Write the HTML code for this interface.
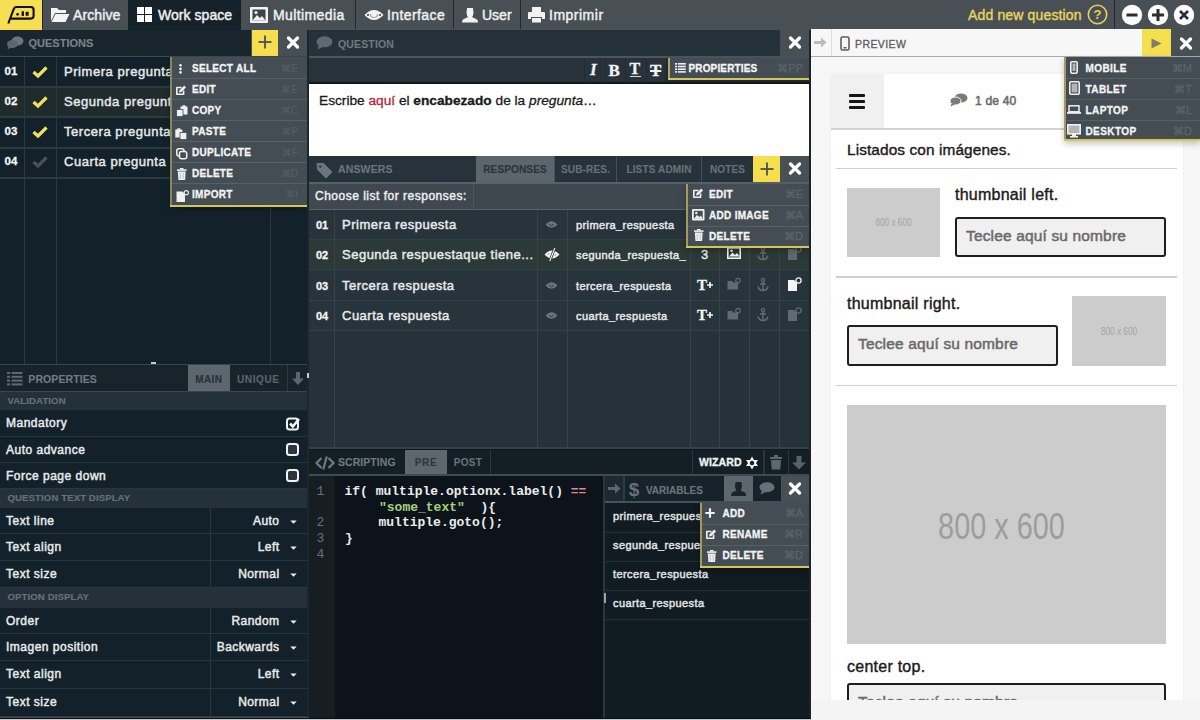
<!DOCTYPE html>
<html><head><meta charset="utf-8">
<style>
*{box-sizing:border-box;margin:0;padding:0}
html,body{width:1200px;height:720px;overflow:hidden;background:#485056;font-family:"Liberation Sans",sans-serif;position:relative}
.a{position:absolute}
.t{position:absolute;white-space:nowrap;line-height:1;-webkit-text-stroke:0.3px currentColor}
svg{position:absolute;overflow:visible}
</style></head><body>
<div class="a" style="left:0px;top:0px;width:1200px;height:30px;background:#485056;"></div>
<div class="a" style="left:0px;top:0px;width:42px;height:30px;background:#f6de55;"></div>
<div class="a" style="left:42px;top:0px;width:1px;height:29px;background:#1f282e;"></div>
<div class="a" style="left:128px;top:0px;width:113px;height:30px;background:#16222a;"></div>
<div class="a" style="left:355px;top:0px;width:1px;height:29px;background:#1f292f;"></div>
<div class="a" style="left:453px;top:0px;width:1px;height:29px;background:#1f292f;"></div>
<div class="a" style="left:520px;top:0px;width:1px;height:29px;background:#1f292f;"></div>
<div class="a" style="left:1114px;top:0px;width:1px;height:29px;background:#1f292f;"></div>
<svg style="left:0px;top:0px;" width="42" height="30" viewBox="0 0 42 30"><path d="M8.3 23.5 L13.8 8.8 Q14.5 7 16.5 7 H30.8 Q33.6 7 33.6 10 V15.8 Q33.6 18.6 30.8 18.6 H11.2" fill="none" stroke="#111" stroke-width="2.1" stroke-linejoin="round"/><circle cx="17.6" cy="14.3" r="1.35" fill="#111"/><rect x="21.6" y="11.3" width="2.4" height="4.6" fill="#111"/><rect x="25.6" y="11.8" width="3" height="4" rx="0.6" fill="#111"/></svg>
<svg style="left:49px;top:6px;" width="22" height="17" viewBox="0 0 22 17"><path d="M2 2 H8 L10 4 H17 V7 H6 L2 15 Z" fill="#f4f4f4"/><path d="M6.5 8 H20.5 L16.5 16 H2.5 Z" fill="#f4f4f4"/></svg>
<div class="t" style="left:73px;top:8.15px;font-size:14px;color:#eef0f0;font-weight:normal;letter-spacing:0.1px;-webkit-text-stroke:0.45px">Archive</div>
<svg style="left:137px;top:7px;" width="15" height="15" viewBox="0 0 15 15"><rect x="0" y="0" width="7" height="7" fill="#fff"/><rect x="8" y="0" width="7" height="7" fill="#fff"/><rect x="0" y="8" width="7" height="7" fill="#fff"/><rect x="8" y="8" width="7" height="7" fill="#fff"/></svg>
<div class="t" style="left:158px;top:8.15px;font-size:14px;color:#eef0f0;font-weight:normal;letter-spacing:0.05px;-webkit-text-stroke:0.45px">Work space</div>
<svg style="left:250px;top:7px;" width="18" height="16" viewBox="0 0 18 16"><rect x="0" y="0" width="18" height="16" rx="1" fill="#f2f2f2"/><rect x="2.5" y="2.5" width="13" height="11" fill="#3b4449"/><path d="M2.5 13.5 L7 8 L10 11 L12 9 L15.5 13.5 Z" fill="#f2f2f2"/><circle cx="6" cy="5.5" r="1.6" fill="#f2f2f2"/></svg>
<div class="t" style="left:273px;top:8.15px;font-size:14px;color:#eef0f0;font-weight:normal;letter-spacing:0.4px;-webkit-text-stroke:0.45px">Multimedia</div>
<svg style="left:364px;top:8px;" width="20" height="14" viewBox="0 0 20 14"><path d="M0.5 7 Q10 -3 19.5 7 Q10 17 0.5 7 Z" fill="#f4f4f4"/><path d="M6.5 6 A3.5 3.5 0 0 0 13.5 6" fill="none" stroke="#9aa0a4" stroke-width="1.2"/><circle cx="4" cy="7" r="1" fill="#333"/><circle cx="16" cy="7" r="1" fill="#333"/></svg>
<div class="t" style="left:387px;top:8.15px;font-size:14px;color:#eef0f0;font-weight:normal;letter-spacing:0.4px;-webkit-text-stroke:0.45px">Interface</div>
<svg style="left:462px;top:7px;" width="16" height="16" viewBox="0 0 16 16"><path d="M5 1 H11 L11.5 6 Q11 9 10 10 L15 12.5 Q16 13.5 16 15.5 H0 Q0 13.5 1 12.5 L6 10 Q5 9 4.5 6 Z" fill="#f2f2f2"/></svg>
<div class="t" style="left:482px;top:8.15px;font-size:14px;color:#eef0f0;font-weight:normal;letter-spacing:0px;-webkit-text-stroke:0.45px">User</div>
<svg style="left:528px;top:7px;" width="17" height="16" viewBox="0 0 17 16"><rect x="4" y="0" width="9" height="5" fill="#f2f2f2"/><path d="M1 5 H16 Q17 5 17 6 V12 H14 V10 H3 V12 H0 V6 Q0 5 1 5 Z" fill="#f2f2f2"/><rect x="4" y="11" width="9" height="4.5" fill="#f2f2f2"/></svg>
<div class="t" style="left:549px;top:8.15px;font-size:14px;color:#eef0f0;font-weight:normal;letter-spacing:0.5px;-webkit-text-stroke:0.45px">Imprimir</div>
<div class="t" style="left:968px;top:8.15px;font-size:14px;color:#e4d25a;font-weight:normal;letter-spacing:0.15px;-webkit-text-stroke:0.45px #e4d25a">Add new question</div>
<svg style="left:1087px;top:4px;" width="21" height="21" viewBox="0 0 21 21"><circle cx="10.5" cy="10.5" r="9.2" fill="none" stroke="#e4d25a" stroke-width="1.6"/><text x="10.5" y="15" text-anchor="middle" font-family="Liberation Sans" font-weight="bold" font-size="13" fill="#e4d25a">?</text></svg>
<svg style="left:1120.8px;top:3.5px;" width="22" height="22" viewBox="0 0 22 22"><circle cx="11" cy="11" r="10.2" fill="#fbfbfb"/><rect x="5.5" y="9.5" width="11" height="3" fill="#2b2f33"/></svg>
<svg style="left:1146.8px;top:3.5px;" width="22" height="22" viewBox="0 0 22 22"><circle cx="11" cy="11" r="10.2" fill="#fbfbfb"/><rect x="5" y="9.5" width="12" height="3" fill="#2b2f33"/><rect x="9.5" y="5" width="3" height="12" fill="#2b2f33"/></svg>
<svg style="left:1172.8px;top:3.5px;" width="22" height="22" viewBox="0 0 22 22"><circle cx="11" cy="11" r="10.2" fill="#fbfbfb"/><path d="M7 7 L15 15 M15 7 L7 15" stroke="#2b2f33" stroke-width="2.6"/></svg>
<div class="a" style="left:0px;top:30px;width:307px;height:27px;background:#485056;"></div>
<div class="a" style="left:0px;top:30px;width:251px;height:25.5px;background:#1a262d;"></div>
<svg style="left:6px;top:36px;" width="18" height="14" viewBox="0 0 18 14"><ellipse cx="11.5" cy="5" rx="6" ry="4.5" fill="#6b767c"/><ellipse cx="6.5" cy="8" rx="5.5" ry="4" fill="#5d686e"/><path d="M2.5 10 L1.5 13.5 L6 11 Z" fill="#5d686e"/></svg>
<div class="t" style="left:28.5px;top:38.19px;font-size:11px;color:#78838a;font-weight:bold;letter-spacing:0px;-webkit-text-stroke:0.15px">QUESTIONS</div>
<div class="a" style="left:251.5px;top:30px;width:26.5px;height:26px;background:#f5df4f;"></div>
<svg style="left:258px;top:35px;" width="14" height="14" viewBox="0 0 14 14"><rect x="0.5" y="6.1" width="13" height="1.8" fill="#4a5358"/><rect x="6.1" y="0.5" width="1.8" height="13" fill="#4a5358"/></svg>
<svg style="left:285.5px;top:35.5px;" width="14" height="14" viewBox="0 0 14 14"><path d="M2.5 2 L11.5 11 M11.5 2 L2.5 11" stroke="#fff" stroke-width="3.3" stroke-linecap="round"/></svg>
<div class="a" style="left:0px;top:55.5px;width:307px;height:2px;background:#3c4951;"></div>
<div class="a" style="left:0px;top:57px;width:307px;height:307px;background:#13222a;"></div>
<div class="a" style="left:0px;top:87px;width:307px;height:30px;background:#1f2b2d;"></div>
<div class="a" style="left:0px;top:86px;width:307px;height:1.5px;background:#2c3a42;"></div>
<div class="a" style="left:0px;top:116px;width:307px;height:1.5px;background:#2c3a42;"></div>
<div class="a" style="left:0px;top:147px;width:307px;height:1.5px;background:#2c3a42;"></div>
<div class="a" style="left:0px;top:177px;width:307px;height:1.5px;background:#2c3a42;"></div>
<div class="a" style="left:24px;top:57px;width:1px;height:307px;background:#2a3840;"></div>
<div class="a" style="left:56px;top:57px;width:1px;height:307px;background:#2a3840;"></div>
<div class="a" style="left:270px;top:57px;width:1px;height:307px;background:#2a3840;"></div>
<div class="t" style="left:4.5px;top:66.27px;font-size:11.5px;color:#f4f4f4;font-weight:bold;letter-spacing:0px;">01</div>
<svg style="left:32px;top:66px;" width="16" height="12" viewBox="0 0 16 12"><path d="M1.5 6 L6 10 L14.5 1.5" fill="none" stroke="#f3df5c" stroke-width="3.2" stroke-linejoin="miter"/></svg>
<div class="t" style="left:64px;top:65.00px;font-size:13px;color:#e6e8e8;font-weight:normal;letter-spacing:0.55px;-webkit-text-stroke:0.45px">Primera pregunta</div>
<div class="t" style="left:4.5px;top:96.27px;font-size:11.5px;color:#f4f4f4;font-weight:bold;letter-spacing:0px;">02</div>
<svg style="left:32px;top:96px;" width="16" height="12" viewBox="0 0 16 12"><path d="M1.5 6 L6 10 L14.5 1.5" fill="none" stroke="#f3df5c" stroke-width="3.2" stroke-linejoin="miter"/></svg>
<div class="t" style="left:64px;top:95.00px;font-size:13px;color:#e6e8e8;font-weight:normal;letter-spacing:0.55px;-webkit-text-stroke:0.45px">Segunda pregunta</div>
<div class="t" style="left:4.5px;top:126.27px;font-size:11.5px;color:#f4f4f4;font-weight:bold;letter-spacing:0px;">03</div>
<svg style="left:32px;top:126px;" width="16" height="12" viewBox="0 0 16 12"><path d="M1.5 6 L6 10 L14.5 1.5" fill="none" stroke="#f3df5c" stroke-width="3.2" stroke-linejoin="miter"/></svg>
<div class="t" style="left:64px;top:125.00px;font-size:13px;color:#e6e8e8;font-weight:normal;letter-spacing:0.55px;-webkit-text-stroke:0.45px">Tercera pregunta</div>
<div class="t" style="left:4.5px;top:156.27px;font-size:11.5px;color:#f4f4f4;font-weight:bold;letter-spacing:0px;">04</div>
<svg style="left:32px;top:156px;" width="16" height="12" viewBox="0 0 16 12"><path d="M1.5 6 L6 10 L14.5 1.5" fill="none" stroke="#46525a" stroke-width="3.2" stroke-linejoin="miter"/></svg>
<div class="t" style="left:64px;top:155.00px;font-size:13px;color:#e6e8e8;font-weight:normal;letter-spacing:0.55px;-webkit-text-stroke:0.45px">Cuarta pregunta</div>
<div class="a" style="left:0px;top:364px;width:307px;height:1px;background:#3a464e;"></div>
<div class="a" style="left:151px;top:362px;width:5px;height:2px;background:#c8ccce;"></div>
<div class="a" style="left:169.5px;top:57px;width:137.5px;height:150px;background:#444d53;box-shadow:0 3px 6px rgba(0,0,0,0.22)"></div>
<div class="a" style="left:169.5px;top:57px;width:2px;height:150px;background:#8a8760;"></div>
<div class="a" style="left:169.5px;top:205px;width:137.5px;height:2px;background:#d6c552;"></div>
<div class="t" style="left:192px;top:64.03px;font-size:10px;color:#f4f4f4;font-weight:bold;letter-spacing:0.3px;">SELECT ALL</div>
<div class="t" style="right:902px;top:64.03px;font-size:10px;color:#566067;font-weight:normal;letter-spacing:0px;-webkit-text-stroke:0">&#8984;E</div>
<div class="a" style="left:171.5px;top:78px;width:135.5px;height:1px;background:#566067;"></div>
<div class="t" style="left:192px;top:85.03px;font-size:10px;color:#f4f4f4;font-weight:bold;letter-spacing:0.3px;">EDIT</div>
<div class="t" style="right:902px;top:85.03px;font-size:10px;color:#566067;font-weight:normal;letter-spacing:0px;-webkit-text-stroke:0">&#8984;E</div>
<div class="a" style="left:171.5px;top:99px;width:135.5px;height:1px;background:#566067;"></div>
<div class="t" style="left:192px;top:106.03px;font-size:10px;color:#f4f4f4;font-weight:bold;letter-spacing:0.3px;">COPY</div>
<div class="t" style="right:902px;top:106.03px;font-size:10px;color:#566067;font-weight:normal;letter-spacing:0px;-webkit-text-stroke:0">&#8984;C</div>
<div class="a" style="left:171.5px;top:120px;width:135.5px;height:1px;background:#566067;"></div>
<div class="t" style="left:192px;top:127.03px;font-size:10px;color:#f4f4f4;font-weight:bold;letter-spacing:0.3px;">PASTE</div>
<div class="t" style="right:902px;top:127.03px;font-size:10px;color:#566067;font-weight:normal;letter-spacing:0px;-webkit-text-stroke:0">&#8984;P</div>
<div class="a" style="left:171.5px;top:141px;width:135.5px;height:1px;background:#566067;"></div>
<div class="t" style="left:192px;top:148.03px;font-size:10px;color:#f4f4f4;font-weight:bold;letter-spacing:0.3px;">DUPLICATE</div>
<div class="t" style="right:902px;top:148.03px;font-size:10px;color:#566067;font-weight:normal;letter-spacing:0px;-webkit-text-stroke:0">&#8984;F</div>
<div class="a" style="left:171.5px;top:162px;width:135.5px;height:1px;background:#566067;"></div>
<div class="t" style="left:192px;top:169.03px;font-size:10px;color:#f4f4f4;font-weight:bold;letter-spacing:0.3px;">DELETE</div>
<div class="t" style="right:902px;top:169.03px;font-size:10px;color:#566067;font-weight:normal;letter-spacing:0px;-webkit-text-stroke:0">&#8984;D</div>
<div class="a" style="left:171.5px;top:183px;width:135.5px;height:1px;background:#566067;"></div>
<div class="t" style="left:192px;top:190.03px;font-size:10px;color:#f4f4f4;font-weight:bold;letter-spacing:0.3px;">IMPORT</div>
<div class="t" style="right:902px;top:190.03px;font-size:10px;color:#566067;font-weight:normal;letter-spacing:0px;-webkit-text-stroke:0">&#8984;I</div>
<svg style="left:179px;top:63.5px;" width="3" height="10" viewBox="0 0 3 10"><circle cx="1.5" cy="1.3" r="1.3" fill="#f0f0f0"/><circle cx="1.5" cy="4.9" r="1.3" fill="#f0f0f0"/><circle cx="1.5" cy="8.4" r="1.3" fill="#f0f0f0"/></svg>
<svg style="left:175px;top:84.5px;" width="12" height="11" viewBox="0 0 12 11"><path d="M6.5 2.5 H1.8 V9.3 H8.6 V5.5" fill="none" stroke="#f0f0f0" stroke-width="1.6" stroke-linejoin="round"/><path d="M4 7.5 L4.6 5.2 L9.2 0.6 L11 2.4 L6.4 7 Z" fill="#f0f0f0"/></svg>
<svg style="left:175.5px;top:105px;" width="12" height="12" viewBox="0 0 12 12"><rect x="4.5" y="1.5" width="7" height="8" fill="#f0f0f0"/><rect x="6.5" y="0.3" width="3" height="2" fill="#f0f0f0"/><rect x="0.5" y="4.5" width="6.5" height="7" fill="#f0f0f0" stroke="#444d53" stroke-width="0.8"/></svg>
<svg style="left:175px;top:127.5px;" width="12" height="11.5" viewBox="0 0 12 11.5"><rect x="0.3" y="1.5" width="7" height="8" fill="#f0f0f0"/><rect x="2.3" y="0.3" width="3" height="2" fill="#f0f0f0"/><rect x="5" y="4.5" width="6.8" height="7" fill="#f0f0f0" stroke="#444d53" stroke-width="0.8"/></svg>
<svg style="left:175.5px;top:147.5px;" width="11.5" height="11.5" viewBox="0 0 11.5 11.5"><rect x="0.8" y="0.8" width="7.2" height="7.2" rx="2" fill="none" stroke="#f0f0f0" stroke-width="1.5"/><rect x="3.5" y="3.5" width="7.2" height="7.2" rx="2" fill="#444d53" stroke="#f0f0f0" stroke-width="1.5"/></svg>
<svg style="left:177px;top:168px;" width="9.5" height="12" viewBox="0 0 9.5 12"><rect x="0" y="1.3" width="9.5" height="1.6" fill="#f0f0f0"/><rect x="3" y="0" width="3.5" height="1.6" fill="#f0f0f0"/><path d="M0.8 3.6 H8.7 L8.1 12 H1.4 Z" fill="#f0f0f0"/><path d="M3.3 5 V10.8 M6.2 5 V10.8" stroke="#a6acaf" stroke-width="0.7"/></svg>
<svg style="left:176px;top:189.5px;" width="13" height="12" viewBox="0 0 13 12"><path d="M0.5 1.5 H6.5 L9 4 V12 H0.5 Z" fill="#f0f0f0"/><circle cx="10.3" cy="2.7" r="2.1" fill="#444d53" stroke="#f0f0f0" stroke-width="1.1"/></svg>
<div class="a" style="left:0px;top:365px;width:307px;height:26px;background:#18242c;"></div>
<svg style="left:7px;top:372px;" width="16" height="14" viewBox="0 0 16 14"><rect x="0" y="0" width="3" height="2" fill="#5f6a70"/><rect x="4.5" y="0" width="11" height="2" fill="#5f6a70"/><rect x="0" y="3.8" width="3" height="2" fill="#5f6a70"/><rect x="4.5" y="3.8" width="11" height="2" fill="#5f6a70"/><rect x="0" y="7.6" width="3" height="2" fill="#5f6a70"/><rect x="4.5" y="7.6" width="11" height="2" fill="#5f6a70"/><rect x="0" y="11.4" width="3" height="2" fill="#5f6a70"/><rect x="4.5" y="11.4" width="11" height="2" fill="#5f6a70"/></svg>
<div class="t" style="left:28.3px;top:374.41px;font-size:10.5px;color:#717b81;font-weight:bold;letter-spacing:0.1px;-webkit-text-stroke:0.1px">PROPERTIES</div>
<div class="a" style="left:188px;top:365px;width:42px;height:26px;background:#5d666c;"></div>
<div class="t" style="left:195.3px;top:374.84px;font-size:10px;color:#27313a;font-weight:bold;letter-spacing:0.35px;-webkit-text-stroke:0.1px">MAIN</div>
<div class="t" style="left:237px;top:374.84px;font-size:10px;color:#5a656b;font-weight:bold;letter-spacing:0.6px;-webkit-text-stroke:0.1px">UNIQUE</div>
<div class="a" style="left:287px;top:365px;width:1px;height:26px;background:#2e3a42;"></div>
<svg style="left:292px;top:372px;" width="12" height="14" viewBox="0 0 12 14"><rect x="4" y="0" width="4" height="7" fill="#5b676d"/><path d="M0 6.5 H12 L6 13 Z" fill="#5b676d"/></svg>
<div class="a" style="left:307px;top:365px;width:3px;height:352px;background:#2a353c;"></div>
<div class="a" style="left:0px;top:391px;width:307px;height:1.5px;background:#3a464e;"></div>
<div class="a" style="left:0px;top:392px;width:307px;height:324px;background:#13222a;"></div>
<div class="a" style="left:0px;top:392px;width:307px;height:18px;background:#25313a;"></div>
<div class="t" style="left:7.5px;top:396.17px;font-size:9.6px;color:#66727a;font-weight:bold;letter-spacing:0.1px;-webkit-text-stroke:0.1px">VALIDATION</div>
<div class="a" style="left:0px;top:436px;width:307px;height:1px;background:#2a363e;"></div>
<div class="t" style="left:6px;top:417.34px;font-size:12px;color:#e9ebeb;font-weight:normal;letter-spacing:0.5px;-webkit-text-stroke:0.45px">Mandatory</div>
<div class="a" style="left:0px;top:462px;width:307px;height:1px;background:#2a363e;"></div>
<div class="t" style="left:6px;top:444.34px;font-size:12px;color:#e9ebeb;font-weight:normal;letter-spacing:0.5px;-webkit-text-stroke:0.45px">Auto advance</div>
<div class="a" style="left:0px;top:488px;width:307px;height:1px;background:#2a363e;"></div>
<div class="t" style="left:6px;top:470.34px;font-size:12px;color:#e9ebeb;font-weight:normal;letter-spacing:0.5px;-webkit-text-stroke:0.45px">Force page down</div>
<div class="a" style="left:0px;top:489px;width:307px;height:19px;background:#25313a;"></div>
<div class="t" style="left:7.5px;top:493.17px;font-size:9.6px;color:#66727a;font-weight:bold;letter-spacing:0.1px;-webkit-text-stroke:0.1px">QUESTION TEXT DISPLAY</div>
<div class="a" style="left:0px;top:533px;width:307px;height:1px;background:#2a363e;"></div>
<div class="t" style="left:6px;top:515.34px;font-size:12px;color:#e9ebeb;font-weight:normal;letter-spacing:0.5px;-webkit-text-stroke:0.45px">Text line</div>
<div class="a" style="left:210px;top:508px;width:1px;height:25px;background:#2a363e;"></div>
<div class="t" style="right:920.5px;top:515.34px;font-size:12px;color:#e9ebeb;font-weight:normal;letter-spacing:0.45px;-webkit-text-stroke:0.45px">Auto</div>
<svg style="left:290px;top:519.5px;" width="7" height="5" viewBox="0 0 7 5"><path d="M0.3 0.5 H6.7 L3.5 3.8 Z" fill="#e9ebeb"/></svg>
<div class="a" style="left:0px;top:560px;width:307px;height:1px;background:#2a363e;"></div>
<div class="t" style="left:6px;top:541.34px;font-size:12px;color:#e9ebeb;font-weight:normal;letter-spacing:0.5px;-webkit-text-stroke:0.45px">Text align</div>
<div class="a" style="left:210px;top:534px;width:1px;height:26px;background:#2a363e;"></div>
<div class="t" style="right:920.5px;top:541.34px;font-size:12px;color:#e9ebeb;font-weight:normal;letter-spacing:0.45px;-webkit-text-stroke:0.45px">Left</div>
<svg style="left:290px;top:545.5px;" width="7" height="5" viewBox="0 0 7 5"><path d="M0.3 0.5 H6.7 L3.5 3.8 Z" fill="#e9ebeb"/></svg>
<div class="a" style="left:0px;top:587px;width:307px;height:1px;background:#2a363e;"></div>
<div class="t" style="left:6px;top:568.34px;font-size:12px;color:#e9ebeb;font-weight:normal;letter-spacing:0.5px;-webkit-text-stroke:0.45px">Text size</div>
<div class="a" style="left:210px;top:561px;width:1px;height:26px;background:#2a363e;"></div>
<div class="t" style="right:920.5px;top:568.34px;font-size:12px;color:#e9ebeb;font-weight:normal;letter-spacing:0.45px;-webkit-text-stroke:0.45px">Normal</div>
<svg style="left:290px;top:572.5px;" width="7" height="5" viewBox="0 0 7 5"><path d="M0.3 0.5 H6.7 L3.5 3.8 Z" fill="#e9ebeb"/></svg>
<div class="a" style="left:0px;top:588px;width:307px;height:20px;background:#25313a;"></div>
<div class="t" style="left:7.5px;top:592.17px;font-size:9.6px;color:#66727a;font-weight:bold;letter-spacing:0.1px;-webkit-text-stroke:0.1px">OPTION DISPLAY</div>
<div class="a" style="left:0px;top:633px;width:307px;height:1px;background:#2a363e;"></div>
<div class="t" style="left:6px;top:615.34px;font-size:12px;color:#e9ebeb;font-weight:normal;letter-spacing:0.5px;-webkit-text-stroke:0.45px">Order</div>
<div class="a" style="left:210px;top:608px;width:1px;height:25px;background:#2a363e;"></div>
<div class="t" style="right:920.5px;top:615.34px;font-size:12px;color:#e9ebeb;font-weight:normal;letter-spacing:0.45px;-webkit-text-stroke:0.45px">Random</div>
<svg style="left:290px;top:619.5px;" width="7" height="5" viewBox="0 0 7 5"><path d="M0.3 0.5 H6.7 L3.5 3.8 Z" fill="#e9ebeb"/></svg>
<div class="a" style="left:0px;top:660px;width:307px;height:1px;background:#2a363e;"></div>
<div class="t" style="left:6px;top:641.34px;font-size:12px;color:#e9ebeb;font-weight:normal;letter-spacing:0.5px;-webkit-text-stroke:0.45px">Imagen position</div>
<div class="a" style="left:210px;top:634px;width:1px;height:26px;background:#2a363e;"></div>
<div class="t" style="right:920.5px;top:641.34px;font-size:12px;color:#e9ebeb;font-weight:normal;letter-spacing:0.45px;-webkit-text-stroke:0.45px">Backwards</div>
<svg style="left:290px;top:645.5px;" width="7" height="5" viewBox="0 0 7 5"><path d="M0.3 0.5 H6.7 L3.5 3.8 Z" fill="#e9ebeb"/></svg>
<div class="a" style="left:0px;top:688px;width:307px;height:1px;background:#2a363e;"></div>
<div class="t" style="left:6px;top:668.34px;font-size:12px;color:#e9ebeb;font-weight:normal;letter-spacing:0.5px;-webkit-text-stroke:0.45px">Text align</div>
<div class="a" style="left:210px;top:661px;width:1px;height:27px;background:#2a363e;"></div>
<div class="t" style="right:920.5px;top:668.34px;font-size:12px;color:#e9ebeb;font-weight:normal;letter-spacing:0.45px;-webkit-text-stroke:0.45px">Left</div>
<svg style="left:290px;top:672.5px;" width="7" height="5" viewBox="0 0 7 5"><path d="M0.3 0.5 H6.7 L3.5 3.8 Z" fill="#e9ebeb"/></svg>
<div class="a" style="left:0px;top:715.5px;width:307px;height:1px;background:#2a363e;"></div>
<div class="t" style="left:6px;top:696.34px;font-size:12px;color:#e9ebeb;font-weight:normal;letter-spacing:0.5px;-webkit-text-stroke:0.45px">Text size</div>
<div class="a" style="left:210px;top:689px;width:1px;height:26.5px;background:#2a363e;"></div>
<div class="t" style="right:920.5px;top:696.34px;font-size:12px;color:#e9ebeb;font-weight:normal;letter-spacing:0.45px;-webkit-text-stroke:0.45px">Normal</div>
<svg style="left:290px;top:700.5px;" width="7" height="5" viewBox="0 0 7 5"><path d="M0.3 0.5 H6.7 L3.5 3.8 Z" fill="#e9ebeb"/></svg>
<svg style="left:286px;top:417px;" width="14" height="14" viewBox="0 0 14 14"><rect x="1" y="1.5" width="11" height="11" rx="2.5" fill="none" stroke="#f2f2f2" stroke-width="2"/><path d="M4 6.5 L6.8 9.5 L13 2" fill="none" stroke="#f2f2f2" stroke-width="2.6"/></svg>
<svg style="left:286px;top:443px;" width="14" height="14" viewBox="0 0 14 14"><rect x="1" y="1" width="11" height="11" rx="2.5" fill="#2c363c" stroke="#f2f2f2" stroke-width="2"/></svg>
<svg style="left:286px;top:469px;" width="14" height="14" viewBox="0 0 14 14"><rect x="1" y="1" width="11" height="11" rx="2.5" fill="#2c363c" stroke="#f2f2f2" stroke-width="2"/></svg>
<div class="a" style="left:307px;top:30px;width:2px;height:687px;background:#1c262c;"></div>
<div class="a" style="left:309px;top:30px;width:501px;height:126px;background:#485056;"></div>
<div class="a" style="left:309px;top:30px;width:471px;height:26px;background:#26323a;"></div>
<svg style="left:316px;top:36px;" width="17" height="14" viewBox="0 0 17 14"><ellipse cx="8.5" cy="5.8" rx="8" ry="5.5" fill="#5f6a70"/><path d="M3 9 L1.5 13.5 L8 10.5 Z" fill="#5f6a70"/></svg>
<div class="t" style="left:338px;top:38.61px;font-size:10.5px;color:#6f797f;font-weight:bold;letter-spacing:0.15px;-webkit-text-stroke:0.1px">QUESTION</div>
<svg style="left:788px;top:36px;" width="14" height="14" viewBox="0 0 14 14"><path d="M2.5 2 L11.5 11 M11.5 2 L2.5 11" stroke="#fff" stroke-width="3.3" stroke-linecap="round"/></svg>
<div class="a" style="left:309px;top:56px;width:501px;height:1.5px;background:#4a555c;"></div>
<div class="a" style="left:309px;top:57.5px;width:501px;height:25px;background:#27323a;"></div>
<div class="a" style="left:309px;top:82px;width:501px;height:1.5px;background:#11191e;"></div>
<div class="a" style="left:584px;top:57.5px;width:1px;height:24.5px;background:#212b32;"></div>
<div class="a" style="left:604.5px;top:57.5px;width:1px;height:24.5px;background:#212b32;"></div>
<div class="a" style="left:625px;top:57.5px;width:1px;height:24.5px;background:#212b32;"></div>
<div class="a" style="left:645.5px;top:57.5px;width:1px;height:24.5px;background:#212b32;"></div>
<div class="a" style="left:666px;top:57.5px;width:1px;height:24.5px;background:#212b32;"></div>
<div class="t" style="left:590px;top:61px;font-family:'Liberation Serif';font-size:17px;font-weight:bold;font-style:italic;color:#f2f2f2;line-height:1">I</div>
<div class="t" style="left:608.5px;top:61.5px;font-family:'Liberation Serif';font-size:17px;font-weight:bold;color:#f2f2f2;line-height:1">B</div>
<div class="t" style="left:629.5px;top:61px;font-family:'Liberation Serif';font-size:16px;font-weight:bold;color:#f2f2f2;line-height:1">T</div>
<div class="a" style="left:629.5px;top:75.5px;width:11.5px;height:1.6px;background:#d8dcdc;"></div>
<div class="t" style="left:650px;top:61.5px;font-family:'Liberation Serif';font-size:17px;font-weight:bold;color:#f2f2f2;line-height:1;text-decoration:line-through;text-decoration-thickness:2px">T</div>
<div class="a" style="left:667.5px;top:57.5px;width:141.5px;height:22px;background:#444d53;box-shadow:0 3px 6px rgba(0,0,0,0.22)"></div>
<div class="a" style="left:667.5px;top:57.5px;width:2px;height:22px;background:#b2a55a;"></div>
<div class="a" style="left:667.5px;top:77.5px;width:141.5px;height:2px;background:#d6c552;"></div>
<svg style="left:675px;top:63px;" width="11" height="10" viewBox="0 0 11 10"><rect x="0" y="0" width="2" height="1.6" fill="#f0f0f0"/><rect x="2.8" y="0" width="8" height="1.6" fill="#f0f0f0"/><rect x="0" y="2.7" width="2" height="1.6" fill="#f0f0f0"/><rect x="2.8" y="2.7" width="8" height="1.6" fill="#f0f0f0"/><rect x="0" y="5.4" width="2" height="1.6" fill="#f0f0f0"/><rect x="2.8" y="5.4" width="8" height="1.6" fill="#f0f0f0"/><rect x="0" y="8.1" width="2" height="1.6" fill="#f0f0f0"/><rect x="2.8" y="8.1" width="8" height="1.6" fill="#f0f0f0"/></svg>
<div class="t" style="left:688.5px;top:63.83px;font-size:10px;color:#f4f4f4;font-weight:bold;letter-spacing:0.15px;">PROPIERTIES</div>
<div class="t" style="right:397px;top:62.99px;font-size:11px;color:#5b646a;font-weight:normal;letter-spacing:0px;">&#8984;PP</div>
<div class="a" style="left:309px;top:83.5px;width:500px;height:72px;background:#ffffff;"></div>
<div class="t" style="left:319px;top:94px;font-size:13.7px;color:#1a1a1a;line-height:1;letter-spacing:0px">Escribe <span style="color:#b8233c">aquí</span> el <b>encabezado</b> de la <i>pregunta</i>…</div>
<div class="a" style="left:309px;top:155.5px;width:501px;height:27px;background:#485056;"></div>
<div class="a" style="left:309px;top:155.5px;width:167px;height:26px;background:#27333b;"></div>
<svg style="left:316px;top:161.5px;" width="17" height="17" viewBox="0 0 17 17"><path d="M1 1.5 H7.5 L16 10 L10 16 L1.5 7.5 Z" fill="#6b767c" stroke="#6b767c" stroke-width="1" stroke-linejoin="round"/><circle cx="4.3" cy="4.6" r="1.2" fill="#27333b"/></svg>
<div class="t" style="left:338px;top:164.11px;font-size:10.5px;color:#6b767c;font-weight:bold;letter-spacing:0.15px;-webkit-text-stroke:0.1px">ANSWERS</div>
<div class="a" style="left:476px;top:155.5px;width:78px;height:26px;background:#5c656b;"></div>
<div class="t" style="left:515.0px;transform:translateX(-50%);top:164.53px;font-size:10px;color:#2a343a;font-weight:bold;letter-spacing:0.15px;-webkit-text-stroke:0.1px">RESPONSES</div>
<div class="a" style="left:555px;top:155.5px;width:61px;height:26px;background:#27333b;"></div>
<div class="t" style="left:585.5px;transform:translateX(-50%);top:164.53px;font-size:10px;color:#66717a;font-weight:bold;letter-spacing:0.15px;-webkit-text-stroke:0.1px">SUB-RES.</div>
<div class="a" style="left:617px;top:155.5px;width:84px;height:26px;background:#27333b;"></div>
<div class="t" style="left:659.0px;transform:translateX(-50%);top:164.53px;font-size:10px;color:#66717a;font-weight:bold;letter-spacing:0.15px;-webkit-text-stroke:0.1px">LISTS ADMIN</div>
<div class="a" style="left:702px;top:155.5px;width:51px;height:26px;background:#27333b;"></div>
<div class="t" style="left:727.5px;transform:translateX(-50%);top:164.53px;font-size:10px;color:#66717a;font-weight:bold;letter-spacing:0.15px;-webkit-text-stroke:0.1px">NOTES</div>
<div class="a" style="left:753px;top:155.5px;width:27px;height:26.5px;background:#f5df4f;"></div>
<svg style="left:759.5px;top:162px;" width="14" height="14" viewBox="0 0 14 14"><rect x="0.5" y="6.1" width="13" height="1.8" fill="#4a5358"/><rect x="6.1" y="0.5" width="1.8" height="13" fill="#4a5358"/></svg>
<svg style="left:788px;top:162px;" width="14" height="14" viewBox="0 0 14 14"><path d="M2.5 2 L11.5 11 M11.5 2 L2.5 11" stroke="#fff" stroke-width="3.3" stroke-linecap="round"/></svg>
<div class="a" style="left:309px;top:181.5px;width:501px;height:2px;background:#56616a;"></div>
<div class="a" style="left:309px;top:183.5px;width:500px;height:25px;background:#3e484e;"></div>
<div class="a" style="left:473px;top:183.5px;width:1.2px;height:25px;background:#4a545a;"></div>
<div class="t" style="left:315px;top:189.54px;font-size:12px;color:#eceeee;font-weight:normal;letter-spacing:0.5px;-webkit-text-stroke:0.45px">Choose list for responses:</div>
<div class="a" style="left:309px;top:208.5px;width:500px;height:1.5px;background:#56616a;"></div>
<div class="a" style="left:309px;top:210px;width:500px;height:237px;background:#26323a;"></div>
<div class="a" style="left:309px;top:210px;width:500px;height:29.5px;background:#28343c;"></div>
<div class="a" style="left:309px;top:239.5px;width:500px;height:30px;background:#2b3937;"></div>
<div class="a" style="left:309px;top:269.5px;width:500px;height:30.5px;background:#28343c;"></div>
<div class="a" style="left:309px;top:300px;width:500px;height:30px;background:#28343c;"></div>
<div class="a" style="left:309px;top:239px;width:500px;height:1px;background:#34414a;"></div>
<div class="a" style="left:309px;top:269px;width:500px;height:1px;background:#34414a;"></div>
<div class="a" style="left:309px;top:299.5px;width:500px;height:1px;background:#34414a;"></div>
<div class="a" style="left:309px;top:330px;width:500px;height:1px;background:#34414a;"></div>
<div class="a" style="left:334px;top:210px;width:1px;height:237px;background:#36434b;"></div>
<div class="a" style="left:537px;top:210px;width:1px;height:237px;background:#36434b;"></div>
<div class="a" style="left:567px;top:210px;width:1px;height:237px;background:#36434b;"></div>
<div class="a" style="left:690px;top:210px;width:1px;height:237px;background:#36434b;"></div>
<div class="a" style="left:719px;top:210px;width:1px;height:237px;background:#36434b;"></div>
<div class="a" style="left:749px;top:210px;width:1px;height:237px;background:#36434b;"></div>
<div class="a" style="left:779px;top:210px;width:1px;height:237px;background:#36434b;"></div>
<div class="t" style="left:316px;top:219.69px;font-size:11px;color:#f4f4f4;font-weight:bold;letter-spacing:0px;">01</div>
<div class="t" style="left:342px;top:218.00px;font-size:13px;color:#e8eaea;font-weight:normal;letter-spacing:0.5px;-webkit-text-stroke:0.45px">Primera respuesta</div>
<div class="t" style="left:576px;top:219.69px;font-size:11px;color:#e6e8e8;font-weight:normal;letter-spacing:0.4px;-webkit-text-stroke:0.45px">primera_respuesta</div>
<svg style="left:545px;top:219.5px;" width="13" height="9" viewBox="0 0 13 9"><path d="M0.5 4.5 Q6.5 -2 12.5 4.5 Q6.5 11 0.5 4.5 Z" fill="#6c777d"/><path d="M4.3 3.8 Q6.5 7.5 8.7 3.8" fill="none" stroke="#28343c" stroke-width="1"/></svg>
<div class="t" style="left:316px;top:249.69px;font-size:11px;color:#f4f4f4;font-weight:bold;letter-spacing:0px;">02</div>
<div class="t" style="left:342px;top:248.00px;font-size:13px;color:#e8eaea;font-weight:normal;letter-spacing:0.5px;-webkit-text-stroke:0.45px">Segunda respuestaque tiene...</div>
<div class="t" style="left:576px;top:249.69px;font-size:11px;color:#e6e8e8;font-weight:normal;letter-spacing:0.4px;-webkit-text-stroke:0.45px">segunda_respuesta_</div>
<svg style="left:544px;top:247px;" width="16" height="15" viewBox="0 0 16 15"><path d="M0.5 7.5 Q8 -0.5 15.5 7.5 Q8 15.5 0.5 7.5 Z" fill="#f4f4f4"/><path d="M10.8 1 L5.8 14" stroke="#2b3937" stroke-width="2.6"/><path d="M10.8 1 L5.8 14" stroke="#f4f4f4" stroke-width="1.1"/><path d="M4 7.5 L5 6.5 M12 7.5 L11 8.5" stroke="#2b3937" stroke-width="1"/></svg>
<div class="t" style="left:316px;top:280.69px;font-size:11px;color:#f4f4f4;font-weight:bold;letter-spacing:0px;">03</div>
<div class="t" style="left:342px;top:279.00px;font-size:13px;color:#e8eaea;font-weight:normal;letter-spacing:0.5px;-webkit-text-stroke:0.45px">Tercera respuesta</div>
<div class="t" style="left:576px;top:280.69px;font-size:11px;color:#e6e8e8;font-weight:normal;letter-spacing:0.4px;-webkit-text-stroke:0.45px">tercera_respuesta</div>
<svg style="left:545px;top:280.5px;" width="13" height="9" viewBox="0 0 13 9"><path d="M0.5 4.5 Q6.5 -2 12.5 4.5 Q6.5 11 0.5 4.5 Z" fill="#6c777d"/><path d="M4.3 3.8 Q6.5 7.5 8.7 3.8" fill="none" stroke="#28343c" stroke-width="1"/></svg>
<div class="t" style="left:316px;top:310.69px;font-size:11px;color:#f4f4f4;font-weight:bold;letter-spacing:0px;">04</div>
<div class="t" style="left:342px;top:309.00px;font-size:13px;color:#e8eaea;font-weight:normal;letter-spacing:0.5px;-webkit-text-stroke:0.45px">Cuarta respuesta</div>
<div class="t" style="left:576px;top:310.69px;font-size:11px;color:#e6e8e8;font-weight:normal;letter-spacing:0.4px;-webkit-text-stroke:0.45px">cuarta_respuesta</div>
<svg style="left:545px;top:310.5px;" width="13" height="9" viewBox="0 0 13 9"><path d="M0.5 4.5 Q6.5 -2 12.5 4.5 Q6.5 11 0.5 4.5 Z" fill="#6c777d"/><path d="M4.3 3.8 Q6.5 7.5 8.7 3.8" fill="none" stroke="#28343c" stroke-width="1"/></svg>
<div class="t" style="left:704.5px;transform:translateX(-50%);top:248.00px;font-size:13px;color:#f2f2f2;font-weight:normal;letter-spacing:0px;">3</div>
<svg style="left:727px;top:247px;" width="14" height="12" viewBox="0 0 14 12"><rect x="0.8" y="0.8" width="12.4" height="10.4" fill="none" stroke="#f2f2f2" stroke-width="1.6"/><path d="M2 9.5 L5.5 5.5 L8 8 L10 6 L12.5 9.5 Z" fill="#f2f2f2"/><circle cx="4.5" cy="3.8" r="1.2" fill="#f2f2f2"/></svg>
<svg style="left:757px;top:247px;" width="12" height="14" viewBox="0 0 12 14"><circle cx="6" cy="2" r="1.6" fill="none" stroke="#5f6b71" stroke-width="1.3"/><path d="M6 3.5 V12.5 M3 6 H9 M1 8.5 Q2 12.5 6 12.5 Q10 12.5 11 8.5" fill="none" stroke="#5f6b71" stroke-width="1.5"/></svg>
<svg style="left:757px;top:278px;" width="12" height="14" viewBox="0 0 12 14"><circle cx="6" cy="2" r="1.6" fill="none" stroke="#5f6b71" stroke-width="1.3"/><path d="M6 3.5 V12.5 M3 6 H9 M1 8.5 Q2 12.5 6 12.5 Q10 12.5 11 8.5" fill="none" stroke="#5f6b71" stroke-width="1.5"/></svg>
<svg style="left:757px;top:308px;" width="12" height="14" viewBox="0 0 12 14"><circle cx="6" cy="2" r="1.6" fill="none" stroke="#5f6b71" stroke-width="1.3"/><path d="M6 3.5 V12.5 M3 6 H9 M1 8.5 Q2 12.5 6 12.5 Q10 12.5 11 8.5" fill="none" stroke="#5f6b71" stroke-width="1.5"/></svg>
<svg style="left:787px;top:246px;" width="16" height="15" viewBox="0 0 16 15"><path d="M1 3 H7 L10 6 V14 H1 Z" fill="#5f6b71"/><circle cx="11.5" cy="3.5" r="2.6" fill="#2b3937" stroke="#5f6b71" stroke-width="1.3"/></svg>
<svg style="left:787px;top:277px;" width="16" height="15" viewBox="0 0 16 15"><path d="M1 3 H7 L10 6 V14 H1 Z" fill="#f4f4f4"/><circle cx="11.5" cy="3.5" r="2.6" fill="#28343c" stroke="#f4f4f4" stroke-width="1.3"/></svg>
<svg style="left:787px;top:307px;" width="16" height="15" viewBox="0 0 16 15"><path d="M1 3 H7 L10 6 V14 H1 Z" fill="#5f6b71"/><circle cx="11.5" cy="3.5" r="2.6" fill="#28343c" stroke="#5f6b71" stroke-width="1.3"/></svg>
<div class="t" style="left:697px;top:277.5px;font-family:'Liberation Serif';font-size:15px;font-weight:bold;color:#f4f4f4;line-height:1">T</div>
<svg style="left:706.5px;top:281.5px;" width="6" height="6" viewBox="0 0 6 6"><path d="M3 0 V6 M0 3 H6" stroke="#f4f4f4" stroke-width="1.6"/></svg>
<svg style="left:727px;top:278px;" width="14" height="12" viewBox="0 0 14 12"><path d="M0.5 3 H5 L6.5 4.5 H11 V11.5 H0.5 Z" fill="#5f6b71"/><circle cx="11" cy="2.6" r="2.3" fill="#28343c" stroke="#5f6b71" stroke-width="1.2"/></svg>
<div class="t" style="left:697px;top:307.5px;font-family:'Liberation Serif';font-size:15px;font-weight:bold;color:#f4f4f4;line-height:1">T</div>
<svg style="left:706.5px;top:311.5px;" width="6" height="6" viewBox="0 0 6 6"><path d="M3 0 V6 M0 3 H6" stroke="#f4f4f4" stroke-width="1.6"/></svg>
<svg style="left:727px;top:308px;" width="14" height="12" viewBox="0 0 14 12"><path d="M0.5 3 H5 L6.5 4.5 H11 V11.5 H0.5 Z" fill="#5f6b71"/><circle cx="11" cy="2.6" r="2.3" fill="#28343c" stroke="#5f6b71" stroke-width="1.2"/></svg>
<div class="a" style="left:556px;top:447px;width:5px;height:2px;background:#c8ccce;"></div>
<div class="a" style="left:686px;top:183.5px;width:123px;height:64.5px;background:#444d53;box-shadow:0 3px 6px rgba(0,0,0,0.22)"></div>
<div class="a" style="left:686px;top:183.5px;width:2px;height:64.5px;background:#a39a5c;"></div>
<div class="a" style="left:686px;top:246px;width:123px;height:2px;background:#d6c552;"></div>
<div class="t" style="left:709px;top:189.84px;font-size:10px;color:#f4f4f4;font-weight:bold;letter-spacing:0.3px;">EDIT</div>
<div class="t" style="right:397px;top:188.99px;font-size:11px;color:#5b646a;font-weight:normal;letter-spacing:0px;">&#8984;E</div>
<div class="a" style="left:688px;top:204.5px;width:121px;height:1px;background:#566067;"></div>
<div class="t" style="left:709px;top:210.84px;font-size:10px;color:#f4f4f4;font-weight:bold;letter-spacing:0.3px;">ADD IMAGE</div>
<div class="t" style="right:397px;top:209.99px;font-size:11px;color:#5b646a;font-weight:normal;letter-spacing:0px;">&#8984;A</div>
<div class="a" style="left:688px;top:225.5px;width:121px;height:1px;background:#566067;"></div>
<div class="t" style="left:709px;top:231.84px;font-size:10px;color:#f4f4f4;font-weight:bold;letter-spacing:0.3px;">DELETE</div>
<div class="t" style="right:397px;top:230.99px;font-size:11px;color:#5b646a;font-weight:normal;letter-spacing:0px;">&#8984;D</div>
<svg style="left:692px;top:188px;" width="12" height="11" viewBox="0 0 12 11"><path d="M6.5 2.5 H1.8 V9.3 H8.6 V5.5" fill="none" stroke="#f0f0f0" stroke-width="1.6" stroke-linejoin="round"/><path d="M4 7.5 L4.6 5.2 L9.2 0.6 L11 2.4 L6.4 7 Z" fill="#f0f0f0"/></svg>
<svg style="left:692px;top:208.5px;" width="12.5" height="11.5" viewBox="0 0 12.5 11.5"><rect x="0" y="0" width="12.5" height="11.5" rx="1" fill="#f0f0f0"/><rect x="1.8" y="1.8" width="8.9" height="7.9" fill="#444d53"/><path d="M1.8 9.7 L5 6 L7.3 8 L8.8 6.5 L10.7 9.7 Z" fill="#f0f0f0"/><circle cx="4.3" cy="4" r="1.2" fill="#f0f0f0"/></svg>
<svg style="left:694px;top:229px;" width="9.5" height="12" viewBox="0 0 9.5 12"><rect x="0" y="1.3" width="9.5" height="1.6" fill="#f0f0f0"/><rect x="3" y="0" width="3.5" height="1.6" fill="#f0f0f0"/><path d="M0.8 3.6 H8.7 L8.1 12 H1.4 Z" fill="#f0f0f0"/><path d="M3.3 5 V10.8 M6.2 5 V10.8" stroke="#a6acaf" stroke-width="0.7"/></svg>
<div class="a" style="left:309px;top:447px;width:501px;height:1.5px;background:#36424a;"></div>
<div class="a" style="left:309px;top:448.5px;width:501px;height:1.5px;background:#0f171c;"></div>
<div class="a" style="left:309px;top:450px;width:501px;height:24px;background:#131e25;"></div>
<svg style="left:315px;top:455.5px;" width="20" height="14" viewBox="0 0 20 14"><path d="M6.5 2 L1.5 7 L6.5 12 M13.5 2 L18.5 7 L13.5 12 M11.8 0.5 L8.2 13.5" fill="none" stroke="#6f7a80" stroke-width="2.2"/></svg>
<div class="t" style="left:338px;top:457.41px;font-size:10.5px;color:#6f7a80;font-weight:bold;letter-spacing:0.05px;-webkit-text-stroke:0.1px">SCRIPTING</div>
<div class="a" style="left:405px;top:450px;width:42px;height:24px;background:#5d676d;"></div>
<div class="t" style="left:426px;transform:translateX(-50%);top:457.84px;font-size:10px;color:#2d373d;font-weight:bold;letter-spacing:0.6px;-webkit-text-stroke:0.1px">PRE</div>
<div class="t" style="left:468px;transform:translateX(-50%);top:457.84px;font-size:10px;color:#66717a;font-weight:bold;letter-spacing:0.3px;-webkit-text-stroke:0.1px">POST</div>
<div class="a" style="left:489.5px;top:450px;width:1.5px;height:24px;background:#2a353c;"></div>
<div class="a" style="left:691.5px;top:450px;width:1.5px;height:24px;background:#2a353c;"></div>
<div class="a" style="left:763px;top:450px;width:1.5px;height:24px;background:#2a353c;"></div>
<div class="a" style="left:787.5px;top:450px;width:1.5px;height:24px;background:#2a353c;"></div>
<div class="a" style="left:809px;top:450px;width:1px;height:24px;background:#2a353c;"></div>
<div class="t" style="left:699px;top:457.41px;font-size:10.5px;color:#f4f4f4;font-weight:bold;letter-spacing:0.1px;">WIZARD</div>
<svg style="left:745px;top:455.5px;" width="14" height="14" viewBox="0 0 14 14"><path d="M7 0.5 L9 4 L13 4 L11 7 L13 10 L9 10 L7 13.5 L5 10 L1 10 L3 7 L1 4 L5 4 Z" fill="#f4f4f4"/><circle cx="7" cy="7" r="2.2" fill="#131e25"/></svg>
<svg style="left:769.5px;top:455px;" width="12" height="15" viewBox="0 0 12 15"><rect x="0" y="2" width="12" height="2" fill="#5d686e"/><rect x="4" y="0" width="4" height="2.5" fill="#5d686e"/><path d="M1 5 H11 L10.3 14.5 H1.7 Z" fill="#5d686e"/></svg>
<svg style="left:792px;top:455.5px;" width="14" height="14" viewBox="0 0 14 14"><rect x="4.5" y="0" width="5" height="7" fill="#56626a"/><path d="M0 6.5 H14 L7 13.5 Z" fill="#56626a"/></svg>
<div class="a" style="left:309px;top:474px;width:501px;height:2px;background:#3f4a51;"></div>
<div class="a" style="left:309px;top:476px;width:294px;height:242px;background:#0c131a;"></div>
<div class="a" style="left:309px;top:476px;width:25.5px;height:242px;background:#161d23;"></div>
<div class="t" style="left:316.5px;top:485.00px;font-size:13px;color:#6a7075;font-weight:normal;letter-spacing:0px;font-family:'Liberation Mono',monospace;-webkit-text-stroke:0">1</div>
<div class="t" style="left:316.5px;top:516.30px;font-size:13px;color:#6a7075;font-weight:normal;letter-spacing:0px;font-family:'Liberation Mono',monospace;-webkit-text-stroke:0">2</div>
<div class="t" style="left:316.5px;top:532.00px;font-size:13px;color:#6a7075;font-weight:normal;letter-spacing:0px;font-family:'Liberation Mono',monospace;-webkit-text-stroke:0">3</div>
<div class="t" style="left:316.5px;top:547.70px;font-size:13px;color:#6a7075;font-weight:normal;letter-spacing:0px;font-family:'Liberation Mono',monospace;-webkit-text-stroke:0">4</div>
<div class="t" style="left:344.5px;top:485.00px;font-size:13px;color:#ececec;font-weight:bold;letter-spacing:0px;font-family:'Liberation Mono',monospace;-webkit-text-stroke:0">if( multiple.optionx.label() <span style="color:#d98c9c">==</span></div>
<div class="t" style="left:379px;top:500.70px;font-size:13px;color:#ececec;font-weight:bold;letter-spacing:0px;font-family:'Liberation Mono',monospace;-webkit-text-stroke:0"><span style="color:#a9cf7e">"some_text"</span>&nbsp; ){</div>
<div class="t" style="left:378.5px;top:516.30px;font-size:13px;color:#ececec;font-weight:bold;letter-spacing:0px;font-family:'Liberation Mono',monospace;-webkit-text-stroke:0">multiple.goto();</div>
<div class="t" style="left:345px;top:532.00px;font-size:13px;color:#ececec;font-weight:bold;letter-spacing:0px;font-family:'Liberation Mono',monospace;-webkit-text-stroke:0">}</div>
<div class="a" style="left:603px;top:476px;width:2px;height:242px;background:#2a353c;"></div>
<div class="a" style="left:605px;top:476px;width:204.5px;height:26px;background:#485056;"></div>
<div class="a" style="left:605px;top:476px;width:18px;height:25px;background:#1d2830;"></div>
<svg style="left:608px;top:483px;" width="13" height="11" viewBox="0 0 13 11"><path d="M0 4 H7 V0.5 L12.5 5.5 L7 10.5 V7 H0 Z" fill="#5b676d"/></svg>
<div class="a" style="left:623px;top:476px;width:1.5px;height:25px;background:#2f3a41;"></div>
<div class="a" style="left:624.5px;top:476px;width:99.5px;height:25px;background:#17232b;"></div>
<svg style="left:628px;top:479px;" width="12" height="20" viewBox="0 0 12 20"><text x="6" y="17" text-anchor="middle" font-family="Liberation Sans" font-weight="bold" font-size="19" fill="#65717a">$</text></svg>
<div class="t" style="left:645.9px;top:485.54px;font-size:10px;color:#6b767c;font-weight:bold;letter-spacing:0px;-webkit-text-stroke:0.1px">VARIABLES</div>
<div class="a" style="left:724px;top:476px;width:28.5px;height:26px;background:#5d666c;"></div>
<svg style="left:731px;top:480.5px;" width="15" height="16" viewBox="0 0 15 16"><path d="M4.5 1 H10.5 L11 5.5 Q10.5 8.5 9.5 9.5 L14 11.5 Q15 12.5 15 15 H0 Q0 12.5 1 11.5 L5.5 9.5 Q4.5 8.5 4 5.5 Z" fill="#1b242a"/></svg>
<div class="a" style="left:752.5px;top:476px;width:28px;height:25px;background:#17232b;"></div>
<svg style="left:759px;top:482px;" width="16" height="13" viewBox="0 0 16 13"><ellipse cx="8" cy="5.3" rx="7.5" ry="5" fill="#66727a"/><path d="M3 8.5 L1.5 12.5 L8 9.5 Z" fill="#66727a"/></svg>
<svg style="left:788px;top:482px;" width="14" height="14" viewBox="0 0 14 14"><path d="M2.5 2 L11.5 11 M11.5 2 L2.5 11" stroke="#fff" stroke-width="3.3" stroke-linecap="round"/></svg>
<div class="a" style="left:605px;top:501px;width:204.5px;height:1.5px;background:#46525a;"></div>
<div class="a" style="left:605px;top:502.5px;width:204.5px;height:215.5px;background:#101b22;"></div>
<div class="a" style="left:605px;top:531.5px;width:204.5px;height:1.5px;background:#252f36;"></div>
<div class="a" style="left:605px;top:560.5px;width:204.5px;height:1.5px;background:#252f36;"></div>
<div class="a" style="left:605px;top:589.5px;width:204.5px;height:1.5px;background:#252f36;"></div>
<div class="a" style="left:605px;top:618.5px;width:204.5px;height:1.5px;background:#252f36;"></div>
<div class="t" style="left:613px;top:511.39px;font-size:11px;color:#e2e4e4;font-weight:normal;letter-spacing:0.4px;-webkit-text-stroke:0.45px">primera_respuesta</div>
<div class="t" style="left:613px;top:540.19px;font-size:11px;color:#e2e4e4;font-weight:normal;letter-spacing:0.4px;-webkit-text-stroke:0.45px">segunda_respuesta</div>
<div class="t" style="left:613px;top:569.19px;font-size:11px;color:#e2e4e4;font-weight:normal;letter-spacing:0.4px;-webkit-text-stroke:0.45px">tercera_respuesta</div>
<div class="t" style="left:613px;top:598.19px;font-size:11px;color:#e2e4e4;font-weight:normal;letter-spacing:0.4px;-webkit-text-stroke:0.45px">cuarta_respuesta</div>
<div class="a" style="left:604px;top:593px;width:1.5px;height:10px;background:#9aa0a4;"></div>
<div class="a" style="left:699.5px;top:502.5px;width:109.5px;height:65px;background:#444d53;box-shadow:0 3px 6px rgba(0,0,0,0.22)"></div>
<div class="a" style="left:699.5px;top:502.5px;width:2px;height:65px;background:#a39a5c;"></div>
<div class="a" style="left:699.5px;top:565.5px;width:109.5px;height:2px;background:#d6c552;"></div>
<div class="t" style="left:722.5px;top:509.04px;font-size:10px;color:#f4f4f4;font-weight:bold;letter-spacing:0.3px;">ADD</div>
<div class="t" style="right:397px;top:508.19px;font-size:11px;color:#5b646a;font-weight:normal;letter-spacing:0px;">&#8984;A</div>
<div class="a" style="left:701.5px;top:523.5px;width:107.5px;height:1px;background:#566067;"></div>
<div class="t" style="left:722.5px;top:530.03px;font-size:10px;color:#f4f4f4;font-weight:bold;letter-spacing:0.3px;">RENAME</div>
<div class="t" style="right:397px;top:529.19px;font-size:11px;color:#5b646a;font-weight:normal;letter-spacing:0px;">&#8984;R</div>
<div class="a" style="left:701.5px;top:544.5px;width:107.5px;height:1px;background:#566067;"></div>
<div class="t" style="left:722.5px;top:551.03px;font-size:10px;color:#f4f4f4;font-weight:bold;letter-spacing:0.3px;">DELETE</div>
<div class="t" style="right:397px;top:550.19px;font-size:11px;color:#5b646a;font-weight:normal;letter-spacing:0px;">&#8984;D</div>
<svg style="left:705px;top:508px;" width="10" height="10" viewBox="0 0 10 10"><path d="M5 0.3 V9.7 M0.3 5 H9.7" stroke="#f0f0f0" stroke-width="2.2"/></svg>
<svg style="left:705px;top:529px;" width="12" height="11" viewBox="0 0 12 11"><path d="M6.5 2.5 H1.8 V9.3 H8.6 V5.5" fill="none" stroke="#f0f0f0" stroke-width="1.6" stroke-linejoin="round"/><path d="M4 7.5 L4.6 5.2 L9.2 0.6 L11 2.4 L6.4 7 Z" fill="#f0f0f0"/></svg>
<svg style="left:706.5px;top:549.5px;" width="9.5" height="12" viewBox="0 0 9.5 12"><rect x="0" y="1.3" width="9.5" height="1.6" fill="#f0f0f0"/><rect x="3" y="0" width="3.5" height="1.6" fill="#f0f0f0"/><path d="M0.8 3.6 H8.7 L8.1 12 H1.4 Z" fill="#f0f0f0"/><path d="M3.3 5 V10.8 M6.2 5 V10.8" stroke="#a6acaf" stroke-width="0.7"/></svg>
<div class="a" style="left:809px;top:30px;width:2px;height:688px;background:#1a2329;"></div>
<div class="a" style="left:307px;top:373px;width:2px;height:5px;background:#c8ccce;"></div>
<div class="a" style="left:0px;top:717.5px;width:811px;height:1.5px;background:#080d11;"></div>
<div class="a" style="left:0px;top:719px;width:811px;height:1px;background:#c3c7c9;"></div>
<div class="a" style="left:811px;top:29px;width:389px;height:691px;background:#f7f7f7;"></div>
<div class="a" style="left:811px;top:29px;width:330.5px;height:27px;background:#f7f7f7;"></div>
<div class="a" style="left:811px;top:56px;width:389px;height:1px;background:#a9aaab;"></div>
<div class="a" style="left:831px;top:29px;width:1px;height:27px;background:#dcdcdc;"></div>
<svg style="left:814px;top:37px;" width="14" height="11" viewBox="0 0 14 11"><path d="M0 4 H7 V0.5 L12.5 5.5 L7 10.5 V7 H0 Z" fill="#b9bbbc"/></svg>
<svg style="left:839.5px;top:35.5px;" width="10" height="15" viewBox="0 0 10 15"><rect x="1" y="1" width="8" height="13" rx="1.5" fill="none" stroke="#5e5e5e" stroke-width="1.6"/><rect x="3.5" y="11" width="3" height="1.5" fill="#5e5e5e"/></svg>
<div class="t" style="left:855px;top:38.81px;font-size:10.5px;color:#5c5c5c;font-weight:normal;letter-spacing:0.4px;">PREVIEW</div>
<div class="a" style="left:1141.5px;top:29px;width:29.5px;height:27px;background:#f5df4f;"></div>
<svg style="left:1150.5px;top:37.5px;" width="11" height="11" viewBox="0 0 11 11"><path d="M0.5 0.5 L10.5 5.5 L0.5 10.5 Z" fill="#7d7d6a"/></svg>
<div class="a" style="left:1171px;top:29px;width:29px;height:27px;background:#485056;"></div>
<svg style="left:1179px;top:36.5px;" width="14" height="14" viewBox="0 0 14 14"><path d="M2.5 2 L11.5 11 M11.5 2 L2.5 11" stroke="#fff" stroke-width="3.3" stroke-linecap="round"/></svg>
<div class="a" style="left:831px;top:74px;width:352px;height:626px;background:#ffffff;box-shadow:0 0 3px rgba(0,0,0,0.06)"></div>
<div class="a" style="left:831px;top:74px;width:53px;height:54px;background:#f0f0f0;"></div>
<div class="a" style="left:831px;top:128px;width:352px;height:1.5px;background:#d2d2d2;"></div>
<div class="a" style="left:849px;top:94px;width:15.5px;height:2.5px;background:#161616;border-radius:1px"></div>
<div class="a" style="left:849px;top:100px;width:15.5px;height:2.5px;background:#161616;border-radius:1px"></div>
<div class="a" style="left:849px;top:106px;width:15.5px;height:2.5px;background:#161616;border-radius:1px"></div>
<svg style="left:949px;top:93px;" width="19" height="14" viewBox="0 0 19 14"><ellipse cx="12" cy="5" rx="6.5" ry="4.5" fill="#7b7b7b"/><ellipse cx="6.5" cy="8" rx="5.5" ry="4" fill="#7b7b7b" stroke="#fff" stroke-width="1"/><path d="M2.5 10.5 L1.5 13.5 L6 11.5 Z" fill="#7b7b7b"/></svg>
<div class="t" style="left:975px;top:94.84px;font-size:12px;color:#6a6a6a;font-weight:normal;letter-spacing:0.2px;-webkit-text-stroke:0.55px #6a6a6a">1 de 40</div>
<div class="t" style="left:847px;top:142.46px;font-size:15.4px;color:#1c1c1c;font-weight:normal;letter-spacing:0.1px;-webkit-text-stroke:0.4px #1c1c1c">Listados con imágenes.</div>
<div class="a" style="left:836px;top:167.5px;width:341px;height:1.5px;background:#cfcfcf;"></div>
<div class="a" style="left:847px;top:187.5px;width:93px;height:69.5px;background:#cccccc;"></div>
<div class="t" style="left:847px;top:216.75px;width:93px;text-align:center;font-size:10px;color:#a3a3a3;line-height:1.1;transform:scaleX(0.82);-webkit-text-stroke:0">800 x 600</div>
<div class="t" style="left:955px;top:187.46px;font-size:16px;color:#1a1a1a;font-weight:normal;letter-spacing:0.25px;-webkit-text-stroke:0.4px #1a1a1a">thumbnail left.</div>
<div class="a" style="left:955px;top:217px;width:211px;height:40px;background:#f0f0f0;border:2px solid #1e1e1e;border-radius:3px;"></div>
<div class="t" style="left:966px;top:228.38px;font-size:15.5px;color:#6a6a6a;font-weight:normal;letter-spacing:0.15px;-webkit-text-stroke:0.5px #6a6a6a">Teclee aquí su nombre</div>
<div class="a" style="left:836px;top:276px;width:341px;height:1.5px;background:#cfcfcf;"></div>
<div class="t" style="left:847px;top:296.46px;font-size:16px;color:#1a1a1a;font-weight:normal;letter-spacing:0.25px;-webkit-text-stroke:0.4px #1a1a1a">thumbnail right.</div>
<div class="a" style="left:847px;top:325px;width:211px;height:41px;background:#f0f0f0;border:2px solid #1e1e1e;border-radius:3px;"></div>
<div class="t" style="left:858px;top:336.38px;font-size:15.5px;color:#6a6a6a;font-weight:normal;letter-spacing:0.15px;-webkit-text-stroke:0.5px #6a6a6a">Teclee aquí su nombre</div>
<div class="a" style="left:1072px;top:296px;width:94px;height:70px;background:#cccccc;"></div>
<div class="t" style="left:1072px;top:325.5px;width:94px;text-align:center;font-size:10px;color:#a3a3a3;line-height:1.1;transform:scaleX(0.82);-webkit-text-stroke:0">800 x 600</div>
<div class="a" style="left:836px;top:384.5px;width:341px;height:1.5px;background:#cfcfcf;"></div>
<div class="a" style="left:847px;top:405px;width:319px;height:239px;background:#cccccc;"></div>
<div class="t" style="left:842px;top:507.15px;width:319px;text-align:center;font-size:37px;color:#9d9d9d;line-height:1.1;transform:scaleX(0.78);-webkit-text-stroke:0">800 x 600</div>
<div class="t" style="left:847px;top:658.96px;font-size:16px;color:#1a1a1a;font-weight:normal;letter-spacing:0.25px;-webkit-text-stroke:0.4px #1a1a1a">center top.</div>
<div class="a" style="left:831px;top:683px;width:352px;height:17px;overflow:hidden">
<div class="a" style="left:16px;top:0px;width:319px;height:41px;background:#f0f0f0;border:2px solid #1e1e1e;border-radius:3px;"></div>
<div class="t" style="left:27px;top:11.38px;font-size:15.5px;color:#6a6a6a;font-weight:normal;letter-spacing:0.15px;-webkit-text-stroke:0.5px #6a6a6a">Teclee aquí su nombre</div>
</div>
<div class="a" style="left:811px;top:700px;width:389px;height:20px;background:#f4f4f4;"></div>
<div class="a" style="left:1063.5px;top:57px;width:136.5px;height:84px;background:#444d53;box-shadow:0 3px 6px rgba(0,0,0,0.22)"></div>
<div class="a" style="left:1063.5px;top:57px;width:2px;height:84px;background:#a39a5c;"></div>
<div class="a" style="left:1063.5px;top:139px;width:136.5px;height:2px;background:#d6c552;"></div>
<div class="t" style="left:1085.5px;top:63.53px;font-size:10px;color:#f4f4f4;font-weight:bold;letter-spacing:0.4px;">MOBILE</div>
<div class="t" style="right:8px;top:62.69px;font-size:11px;color:#5b646a;font-weight:normal;letter-spacing:0px;">&#8984;M</div>
<div class="a" style="left:1065.5px;top:78px;width:134.5px;height:1px;background:#566067;"></div>
<div class="t" style="left:1085.5px;top:84.53px;font-size:10px;color:#f4f4f4;font-weight:bold;letter-spacing:0.4px;">TABLET</div>
<div class="t" style="right:8px;top:83.69px;font-size:11px;color:#5b646a;font-weight:normal;letter-spacing:0px;">&#8984;T</div>
<div class="a" style="left:1065.5px;top:99px;width:134.5px;height:1px;background:#566067;"></div>
<div class="t" style="left:1085.5px;top:105.53px;font-size:10px;color:#f4f4f4;font-weight:bold;letter-spacing:0.4px;">LAPTOP</div>
<div class="t" style="right:8px;top:104.69px;font-size:11px;color:#5b646a;font-weight:normal;letter-spacing:0px;">&#8984;L</div>
<div class="a" style="left:1065.5px;top:120px;width:134.5px;height:1px;background:#566067;"></div>
<div class="t" style="left:1085.5px;top:126.53px;font-size:10px;color:#f4f4f4;font-weight:bold;letter-spacing:0.4px;">DESKTOP</div>
<div class="t" style="right:8px;top:125.69px;font-size:11px;color:#5b646a;font-weight:normal;letter-spacing:0px;">&#8984;D</div>
<svg style="left:1070px;top:61px;" width="8" height="13" viewBox="0 0 8 13"><rect x="0.8" y="0.8" width="6.4" height="11.4" rx="1.2" fill="none" stroke="#f0f0f0" stroke-width="1.6"/><rect x="2.5" y="2.5" width="3" height="7.5" fill="#b5b5b5"/></svg>
<svg style="left:1069px;top:81px;" width="11" height="14" viewBox="0 0 11 14"><rect x="0.8" y="0.8" width="9.4" height="12.4" rx="1" fill="none" stroke="#f0f0f0" stroke-width="1.6"/><rect x="2.6" y="2.6" width="5.8" height="8.8" fill="#b5b5b5"/></svg>
<svg style="left:1067px;top:105px;" width="14" height="9" viewBox="0 0 14 9"><rect x="2" y="0.8" width="10" height="6" fill="none" stroke="#f0f0f0" stroke-width="1.5"/><rect x="0" y="7" width="14" height="1.8" fill="#f0f0f0"/></svg>
<svg style="left:1067px;top:124px;" width="14" height="14" viewBox="0 0 14 14"><rect x="0.8" y="0.8" width="12.4" height="9" fill="#b5b5b5" stroke="#f0f0f0" stroke-width="1.6"/><rect x="5" y="10" width="4" height="2.5" fill="#f0f0f0"/><rect x="3" y="12" width="8" height="1.6" fill="#f0f0f0"/></svg>
</body></html>
